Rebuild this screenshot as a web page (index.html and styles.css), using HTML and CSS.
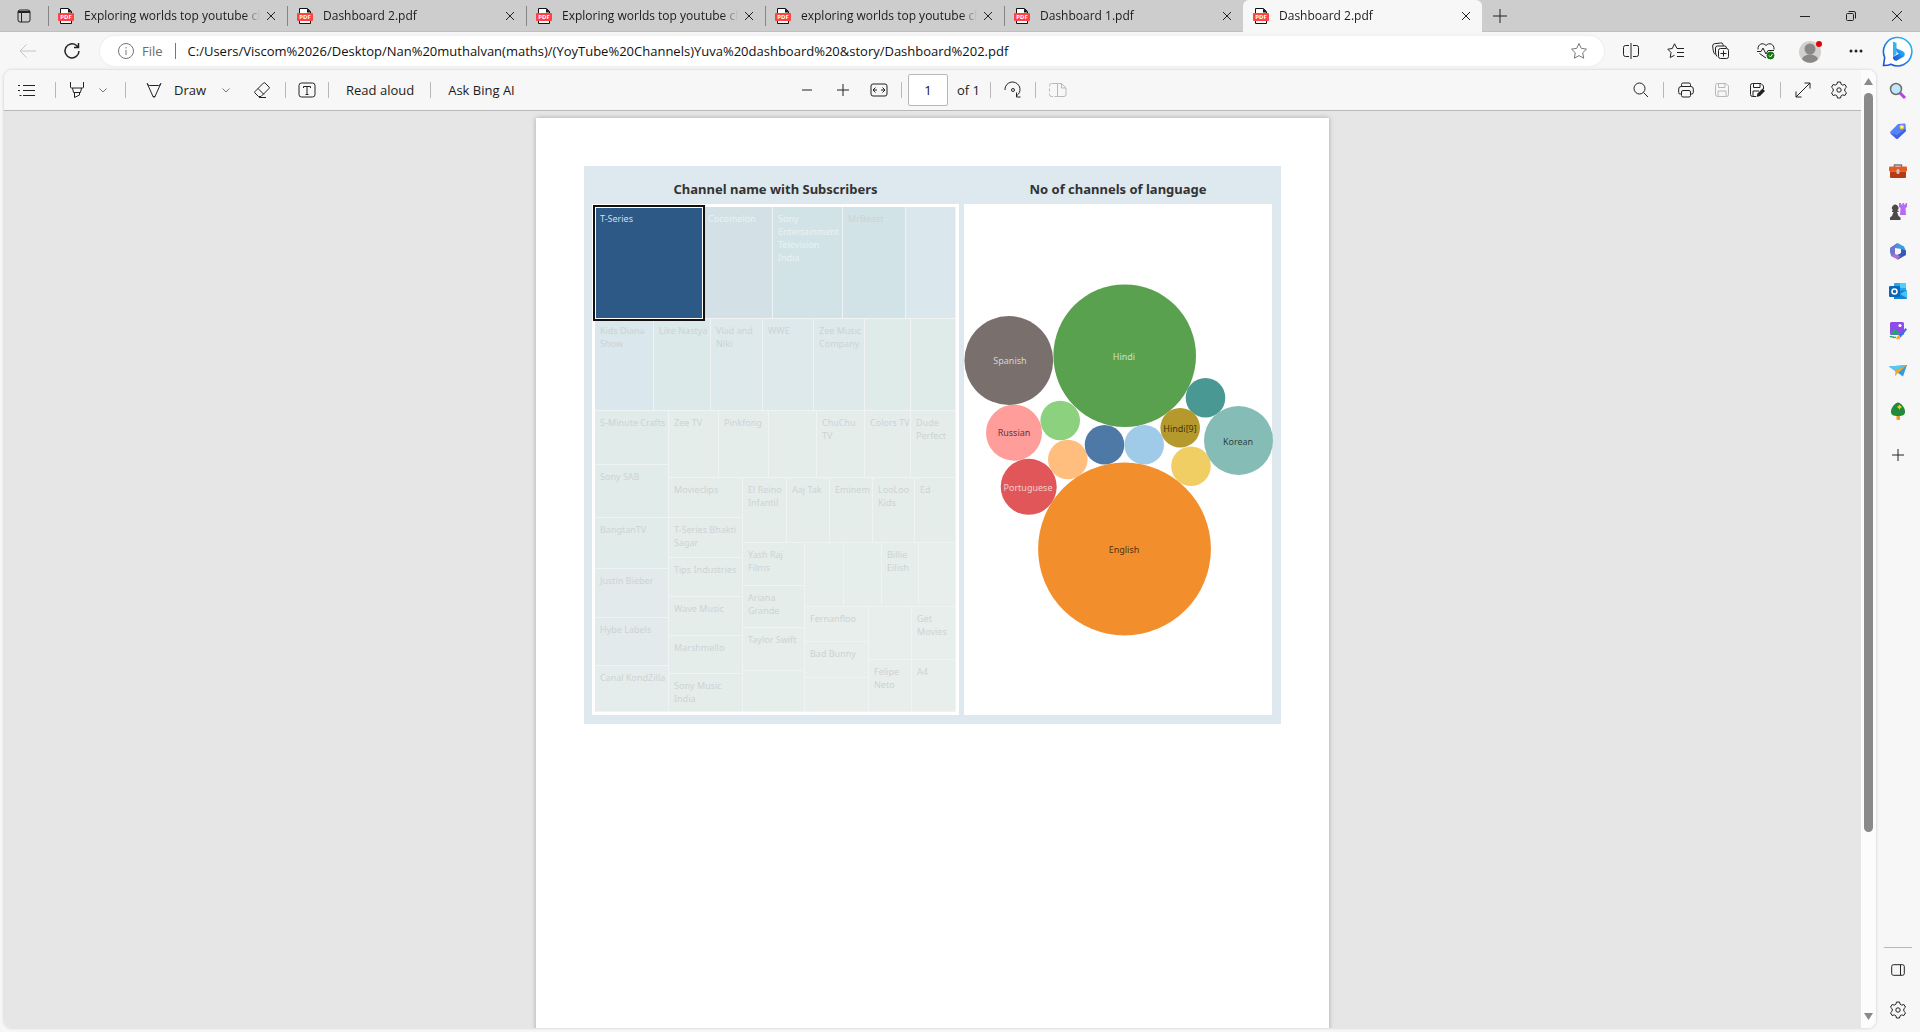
FILE: index.html
```html
<!DOCTYPE html>
<html lang="en">
<head>
<meta charset="utf-8">
<title>Dashboard 2.pdf</title>
<link rel="stylesheet" href="styles.css">
</head>
<body>
<svg class="defs" aria-hidden="true">
  <symbol id="pdf" viewBox="0 0 16 16"><path d="M2.500 .5h8l3 3v12h-11z" fill="#fff" stroke="#111"/><path d="M10 .5v4h4z" fill="#111" stroke="none"/><rect y="5" width="16" height="8" rx="1" fill="#ff4242" stroke="none"/></symbol>
  <symbol id="x" viewBox="0 0 10 10"><path d="M1 1l8 8M9 1l-8 8"/></symbol>
  <symbol id="plus" viewBox="0 0 14 14"><path d="M7 0v14M0 7h14"/></symbol>
  <symbol id="chev" viewBox="0 0 8 5"><path d="M.5 .5L4 4 7.500 .5"/></symbol>
  <symbol id="gear" viewBox="0 0 18 18"><path d="M7.500 1h3l.6 2.200 1.600.9 2.200-.6 1.600 2.700-1.700 1.600v2.400l1.700 1.600-1.600 2.700-2.200-.6-1.600.9-.6 2.200h-3l-.6-2.200-1.600-.9-2.200.6-1.600-2.700 1.700-1.600V7.800L1.500 6.200l1.600-2.700 2.200.6 1.600-.9z" stroke-linejoin="round"/><circle cx="9" cy="9" r="2.200"/></symbol>
</svg>

<header class="tabs">
  <button class="tab-menu" aria-label="Tab actions"><svg width="14" height="14" viewBox="0 0 14 14"><rect x="1" y="1" width="12" height="12" rx="2"/><path d="M1 2.500h12M1 3.500h12M4.500 4v9"/></svg></button>
  <div class="tab"><button class="tab-label"><svg width="16" height="16"><use href="#pdf"/><text x="8" y="11">PDF</text></svg><span>Exploring worlds top youtube channels</span></button><button class="close" aria-label="Close tab"><svg width="10" height="10"><use href="#x"/></svg></button></div>
  <div class="tab"><button class="tab-label"><svg width="16" height="16"><use href="#pdf"/><text x="8" y="11">PDF</text></svg><span>Dashboard 2.pdf</span></button><button class="close" aria-label="Close tab"><svg width="10" height="10"><use href="#x"/></svg></button></div>
  <div class="tab"><button class="tab-label"><svg width="16" height="16"><use href="#pdf"/><text x="8" y="11">PDF</text></svg><span>Exploring worlds top youtube channels</span></button><button class="close" aria-label="Close tab"><svg width="10" height="10"><use href="#x"/></svg></button></div>
  <div class="tab"><button class="tab-label"><svg width="16" height="16"><use href="#pdf"/><text x="8" y="11">PDF</text></svg><span>exploring worlds top youtube channels</span></button><button class="close" aria-label="Close tab"><svg width="10" height="10"><use href="#x"/></svg></button></div>
  <div class="tab"><button class="tab-label"><svg width="16" height="16"><use href="#pdf"/><text x="8" y="11">PDF</text></svg><span>Dashboard 1.pdf</span></button><button class="close" aria-label="Close tab"><svg width="10" height="10"><use href="#x"/></svg></button></div>
  <div class="tab active"><button class="tab-label"><svg width="16" height="16"><use href="#pdf"/><text x="8" y="11">PDF</text></svg><span>Dashboard 2.pdf</span></button><button class="close" aria-label="Close tab"><svg width="10" height="10"><use href="#x"/></svg></button></div>
  <button class="icon" aria-label="New tab"><svg width="14" height="14"><use href="#plus"/></svg></button>
  <div class="window-controls">
    <button aria-label="Minimize"><svg width="10" height="10"><path d="M0 5.500h10"/></svg></button>
    <button aria-label="Restore"><svg width="10" height="10"><rect x=".5" y="2.500" width="7" height="7" rx="1"/><path d="M2.500 .5H8a1.500 1.500 0 0 1 1.500 1.500v5.500"/></svg></button>
    <button aria-label="Close"><svg width="10" height="10"><path d="M0 0l10 10M10 0L0 10"/></svg></button>
  </div>
</header>

<div class="shell">
  <div class="main">
    <nav class="address-row">
      <button class="nav back" aria-label="Back"><svg width="18" height="14"><path d="M17 7H1M7.500 .5L1 7l6.500 6.500"/></svg></button>
      <button class="nav" aria-label="Reload"><svg class="bold" width="18" height="18"><path d="M16 9a7 7 0 1 1-2.500-5.500L15 5M15.500 1v4.500H11"/></svg></button>
      <div class="address">
        <svg width="16" height="16" class="grey"><circle cx="8" cy="8" r="7.500"/><path d="M8 7v5M8 4v1.500"/></svg>
        <span class="scheme">File</span>
        <input type="text" aria-label="Address" value="C:/Users/Viscom%2026/Desktop/Nan%20muthalvan(maths)/(YoyTube%20Channels)Yuva%20dashboard%20&amp;story/Dashboard%202.pdf">
        <button class="icon" aria-label="Add to favorites"><svg class="grey" width="18" height="18"><path d="M9 1.500l2.300 4.900 5.200.7-3.800 3.700 1 5.400L9 13.600l-4.700 2.600 1-5.400L1.500 7.100l5.200-.7z" stroke-linejoin="round"/></svg></button>
      </div>
      <div class="tools">
        <button aria-label="Split screen"><svg width="16" height="16"><path d="M8 0v16M6 2.500H2.500a2 2 0 0 0-2 2v7a2 2 0 0 0 2 2H6M10 2.500h3.500a2 2 0 0 1 2 2v7a2 2 0 0 1-2 2H10"/></svg></button>
        <button aria-label="Favorites"><svg width="18" height="16"><path d="M10 5.500L7.500 .8 5.300 5.500.8 6.200 4 9.500l-.8 5L7.500 12.300M10 5.500h7M10 9.500h7M10 13.500h7" stroke-linejoin="round"/></svg></button>
        <button aria-label="Collections"><svg width="18" height="18"><path d="M3.500 12.500C2 12 1.500 10 1 7L.7 4a2 2 0 0 1 1.500-2.200L8.500 1A2 2 0 0 1 11 2.500l.3 1.500"/><path d="M5 14.500A8 8 0 0 1 3.500 10V6A2 2 0 0 1 5.500 4h7a2 2 0 0 1 2 2"/><rect x="6.500" y="6.500" width="10" height="10" rx="2"/><path d="M11.500 8.500v6M8.500 11.500h6"/></svg></button>
        <button aria-label="Browser essentials"><svg width="18" height="18"><path d="M1 7.500C.5 2 6 0 9 3.500 12 0 17.500 2 17 7.500M0 9.500h4l2-3.500 3 6 2-3.500h6M2.500 11.500L9 16"/><circle cx="13.500" cy="13.500" r="3.500" class="ok"/><path d="M12 13.500l1.500 1.500 2-3" stroke="#fff"/></svg></button>
        <button aria-label="Profile"><svg width="24" height="24" class="fill"><circle cx="11" cy="13" r="11" fill="#d2d0ce"/><circle cx="11" cy="10" r="5.500" fill="#8a8886"/><path d="M3 20c2-6 14-6 16 0-4 5-12 5-16 0z" fill="#8a8886"/><circle cx="20" cy="5" r="3" fill="#e80000"/></svg></button>
        <button aria-label="More"><svg width="14" height="4" class="fill"><circle cx="2" cy="2" r="1.500"/><circle cx="7" cy="2" r="1.500"/><circle cx="12" cy="2" r="1.500"/></svg></button>
      </div>
    </nav>

    <section class="viewer">
      <div class="document">
        <div class="toolbar">
          <div class="group left">
            <button class="lead" aria-label="Contents"><svg width="18" height="14"><path d="M5 2.500h12M5 7.500h12M5 12.500h12M0 2.500h2M0 7.500h2M1.500 12.500h2"/></svg></button>
            <i class="sep"></i>
            <button aria-label="Highlight"><svg width="16" height="18"><path d="M1.500 1v5a1 1 0 0 0 1 1h11a1 1 0 0 0 1-1V1M3.500 7l1 4.500h7l1-4.500M5.500 11.500v5l5-2.500v-2.500"/></svg></button>
            <button class="small" aria-label="Highlight colors"><svg class="grey" width="8" height="5"><use href="#chev"/></svg></button>
            <i class="sep far"></i>
            <button class="draw"><svg width="16" height="16"><path d="M1 1l6 13.500h2L15 1M1 2.500l2.500 1h9l2.500-1M7 14.500l1 1 1-1"/></svg>Draw</button>
            <button class="small" aria-label="Draw options"><svg class="grey" width="8" height="5"><use href="#chev"/></svg></button>
            <button class="erase" aria-label="Erase"><svg width="18" height="18"><path d="M2 10.500L10.500 2a1 1 0 0 1 1.500 0l4 4a1 1 0 0 1 0 1.500L8 15.500H5.500L2 12a1 1 0 0 1 0-1.500zM5 7.500l6 6M6 16.500h7"/></svg></button>
            <i class="sep"></i>
            <button aria-label="Add text"><svg width="18" height="16"><rect x="1" y="1" width="16" height="14" rx="2.500"/><path d="M5.500 6V4.500h7V6M9 4.500v8M7.500 12.500h3"/></svg></button>
            <i class="sep"></i>
            <button class="text">Read aloud</button>
            <i class="sep"></i>
            <button class="text">Ask Bing AI</button>
          </div>
          <div class="group center">
            <button aria-label="Zoom out"><svg width="10" height="2"><path d="M0 1h10"/></svg></button>
            <button aria-label="Zoom in"><svg width="12" height="12"><path d="M6 0v12M0 6h12"/></svg></button>
            <button aria-label="Fit to width"><svg width="18" height="14"><rect x="1" y="1" width="16" height="12" rx="2"/><path d="M7 7H3.500M5.500 4.500L3 7l2.500 2.500M11 7h3.500M12.500 4.500L15 7l-2.500 2.500"/></svg></button>
            <i class="sep"></i>
            <input type="text" value="1" id="page-number"><label for="page-number">of 1</label>
            <i class="sep"></i>
            <button aria-label="Rotate"><svg width="18" height="18"><path d="M1 9a7.500 7.500 0 1 1 12 5.500M12.500 11.500v4.500h4"/><circle cx="9" cy="9" r="1.500"/></svg></button>
            <i class="sep"></i>
            <button aria-label="Page view" disabled><svg width="18" height="14"><path d="M8 .5H3M2.500 .5a2 2 0 0 0-2 2v1M.5 5.500v3M.5 10.500v1a2 2 0 0 0 2 2H4M5.500 13.500H8M8.500 .5v13H15a2 2 0 0 0 2-2V5L12.500 .5zM12.500 .5V5H17"/></svg></button>
          </div>
          <div class="group right">
            <button aria-label="Search"><svg width="16" height="16"><circle cx="6.500" cy="6.500" r="5.500"/><path d="M10.500 10.500L15 15"/></svg></button>
            <i class="sep"></i>
            <button aria-label="Print"><svg width="16" height="16"><path d="M3.500 4.500V2.500a1.500 1.500 0 0 1 1.500-1.500h6a1.500 1.500 0 0 1 1.500 1.500v2M3.500 12H2.500A1.500 1.500 0 0 1 .7 10.500V7a2.500 2.500 0 0 1 2.500-2.500h9.600A2.500 2.500 0 0 1 15.300 7v3.500a1.500 1.500 0 0 1-1.500 1.500h-1.300"/><rect x="3.500" y="8.500" width="9" height="6.500" rx="1.500"/></svg></button>
            <button aria-label="Save" disabled><svg width="14" height="14"><path d="M.5 2.500a2 2 0 0 1 2-2H11L13.500 3v8.500a2 2 0 0 1-2 2h-9a2 2 0 0 1-2-2zM3.500 .5v4H10v-4M3 13.500V8h8v5.500"/></svg></button>
            <button aria-label="Save as"><svg width="16" height="14"><path d="M6 13.500H2.500a2 2 0 0 1-2-2v-9a2 2 0 0 1 2-2H11L13.500 3v3M3.500 .5v4H10v-4M3 13.500V8h6"/><path d="M6.500 14l1-3.500 5-5 2.500 2.500-5 5z" fill="#222" stroke="none"/></svg></button>
            <i class="sep"></i>
            <button aria-label="Full screen"><svg width="16" height="16"><path d="M9.500 1H15v5.500M15 1L1 15M1 9.500V15h5.500"/></svg></button>
            <button aria-label="Settings"><svg width="18" height="18"><use href="#gear"/></svg></button>
          </div>
        </div>

        <div class="canvas">
          <article class="page">
            <div class="dashboard">
              <section class="panel">
                <h2>Channel name with Subscribers</h2>
                <div class="treemap">
                  <div class="row r1 c-teal">
                    <div class="tile selected">T-Series</div><div class="tile light c-slate">Cocomelon</div><div class="tile light">Sony Entertainment Television India</div><div class="tile">MrBeast</div><div class="tile c-sky"></div>
                  </div>
                  <div class="row r2 c-mist">
                    <div class="tile c-sky">Kids Diana Show</div><div class="tile c-aqua">Like Nastya</div><div class="tile">Vlad and Niki</div><div class="tile">WWE</div><div class="tile">Zee Music Company</div><div class="tile c-mint"></div><div class="tile c-mint"></div>
                  </div>
                  <div class="split s1">
                    <div class="col k1 c-ice">
                      <div class="tile">5-Minute Crafts</div><div class="tile">Sony SAB</div><div class="tile">BangtanTV</div><div class="tile c-haze">Justin Bieber</div><div class="tile c-haze">Hybe Labels</div><div class="tile c-sage">Canal KondZilla</div>
                    </div>
                    <div class="stack t1">
                      <div class="row r3">
                        <div class="tile">Zee TV</div><div class="tile">Pinkfong</div><div class="tile"></div><div class="tile">ChuChu TV</div><div class="tile">Colors TV</div><div class="tile">Dude Perfect</div>
                      </div>
                      <div class="split s2">
                        <div class="col k2">
                          <div class="tile">Movieclips</div><div class="tile">T-Series Bhakti Sagar</div><div class="tile">Tips Industries</div><div class="tile">Wave Music</div><div class="tile">Marshmello</div><div class="tile">Sony Music India</div>
                        </div>
                        <div class="stack t2">
                          <div class="row r4">
                            <div class="tile">El Reino Infantil</div><div class="tile">Aaj Tak</div><div class="tile">Eminem</div><div class="tile">LooLoo Kids</div><div class="tile">Ed</div>
                          </div>
                          <div class="split s3">
                            <div class="col k3">
                              <div class="tile">Yash Raj Films</div><div class="tile">Ariana Grande</div><div class="tile c-leaf">Taylor Swift</div><div class="tile c-leaf"></div>
                            </div>
                            <div class="stack t3">
                              <div class="row r5 c-leaf">
                                <div class="tile"></div><div class="tile"></div><div class="tile">Billie Eilish</div><div class="tile c-fog"></div>
                              </div>
                              <div class="split s4 c-fog">
                                <div class="col k4">
                                  <div class="tile">Fernanfloo</div><div class="tile">Bad Bunny</div><div class="tile"></div>
                                </div>
                                <div class="quad">
                                  <div class="tile"></div><div class="tile">Get Movies</div><div class="tile">Felipe Neto</div><div class="tile">A4</div>
                                </div>
                              </div>
                            </div>
                          </div>
                        </div>
                      </div>
                    </div>
                  </div>
                </div>
              </section>
              <section class="panel">
                <h2>No of channels of language</h2>
                <div class="bubbles">
                  <svg viewBox="0 0 308 511" role="img" aria-label="Channels by language">
                    <circle cx="44.800" cy="156.500" r="44.400" fill="#79706e"/>
                    <circle cx="160.700" cy="151.700" r="71.300" fill="#59a14f"/>
                    <circle cx="241.500" cy="193.800" r="19.800" fill="#499894"/>
                    <circle cx="50" cy="228.700" r="28" fill="#ff9d9a"/>
                    <circle cx="96.200" cy="216.500" r="19.800" fill="#8cd17d"/>
                    <circle cx="103.800" cy="255.500" r="19.800" fill="#ffbe7d"/>
                    <circle cx="140.500" cy="240.800" r="19.800" fill="#4e79a7"/>
                    <circle cx="180.200" cy="240.800" r="19.800" fill="#a0cbe8"/>
                    <circle cx="216.200" cy="223.800" r="19.800" fill="#b6992d"/>
                    <circle cx="227" cy="262.200" r="19.800" fill="#f1ce63"/>
                    <circle cx="274.500" cy="236.500" r="34.500" fill="#86bcb6"/>
                    <circle cx="64.700" cy="282.800" r="28" fill="#e15759"/>
                    <circle cx="160.500" cy="345" r="86.400" fill="#f28e2b"/>
                    <text class="pale" x="46" y="160">Spanish</text>
                    <text class="pale" x="160" y="156">Hindi</text>
                    <text x="50" y="232">Russian</text>
                    <text x="216" y="228">Hindi[9]</text>
                    <text x="274" y="241">Korean</text>
                    <text class="pale" x="64" y="287">Portuguese</text>
                    <text x="160" y="349">English</text>
                  </svg>
                </div>
              </section>
            </div>
          </article>
        </div>
      </div>
      <div class="scrollbar">
        <svg width="9" height="7"><path d="M0 7L4.500 0 9 7z"/></svg>
        <div class="track"><div class="thumb"></div></div>
        <svg width="9" height="7"><path d="M0 0h9L4.500 7z"/></svg>
      </div>
    </section>
  </div>

  <aside class="sidebar">
    <button class="bing" aria-label="Bing chat"><svg class="color" width="32" height="32" viewBox="0 0 32 32"><defs><linearGradient id="bg1" x1="0" y1="1" x2="1" y2="0"><stop stop-color="#2448c8"/><stop offset=".5" stop-color="#1e88f0"/><stop offset="1" stop-color="#35c8e8"/></linearGradient></defs><path d="M1.500 30.500l1.200-8A14.200 14.200 0 1 1 9 29.200c-2 1-5 1.300-7.500 1.300z" fill="#fff" stroke="url(#bg1)" stroke-width="1.600"/><path d="M11 6.500l3.500 1.500v11l-3.500 3z" fill="#35b4f0"/><path d="M11 22l6-3.500-2-1-1.500-4.500 7 3a3.500 3.500 0 0 1 1.500 5.500L15 25.500A3 3 0 0 1 11 23z" fill="url(#bg1)"/></svg></button>
    <button aria-label="Search"><svg class="color" width="18" height="18"><path d="M11 11l5 5" stroke="#c23cf0" stroke-width="3"/><circle cx="7" cy="7" r="5.500" fill="#bfe6fa" stroke="#6d6d6d" stroke-width="1.500"/></svg></button>
    <button aria-label="Shopping"><svg class="color" width="18" height="18"><path d="M9 2l6.500-.5a1 1 0 0 1 1 1L17 9l-8 7.500a1.500 1.500 0 0 1-2 0L1.500 11.500a1.500 1.500 0 0 1 0-2z" fill="#5484f8"/><path d="M1.500 11.500L7 16.500a1.500 1.500 0 0 0 2 0L17 9l-1-2-8 6z" fill="#4560e4"/><circle cx="12.800" cy="5" r="1.700" fill="#fff" stroke="#f0cc28" stroke-width="1.300"/></svg></button>
    <button aria-label="Tools"><svg class="color" width="18" height="18"><path d="M5.500 5V3h7v2" fill="none" stroke="#777" stroke-width="1.500"/><rect y="4.500" width="18" height="5" rx="1" fill="#e35b25"/><path d="M1 9.500h16V15a1 1 0 0 1-1 1H2a1 1 0 0 1-1-1z" fill="#b83a12"/><rect x="7.500" y="7" width="3" height="5" rx="1.500" fill="#c8c8c8"/></svg></button>
    <button aria-label="Games"><svg class="color" width="18" height="18"><path d="M10 1h2v1.500h1.500V1h1.500v1.500h1.500V1H18v4l-1.500 1 .5 7h-6l.5-7L10 5z" fill="#b96af5"/><path d="M1 18v-2.500l2-1.500 1.500-4H3V8.500h1.200a3.200 3.200 0 1 1 4 0H9.500V10H8l1.500 4 2 1.500V18z" fill="#4c4a4a"/></svg></button>
    <button aria-label="Microsoft 365"><svg class="color" width="18" height="18"><path d="M8.500 1l6.500 3.500 2 4.500-5 2V7L6 6 1 12V6z" fill="#3d9be0"/><path d="M1 6l7.500-5L6 6v6l5 4-2 1.500L2 14z" fill="#7a70cc"/><path d="M17 8.500V13l-8 4.500-4-3 7-3.500V7z" fill="#3d57b8"/><path d="M9 17.500l-7-4 4-1.500 5 2z" fill="#b56fd0"/><circle cx="9" cy="9.300" r="2.600" fill="#f7f7f7"/></svg></button>
    <button aria-label="Outlook"><svg class="color" width="18" height="18"><rect x="5" y="1" width="12" height="11" rx="1" fill="#28a8ea"/><path d="M11 1h5a1 1 0 0 1 1 1v4h-6z" fill="#50d0f8"/><path d="M5 9l13-1v8a1 1 0 0 1-1 1H5z" fill="#1584d8"/><path d="M11 12l7-4v8z" fill="#45c4f4"/><rect y="4" width="11" height="11" rx="1" fill="#0a68b8"/><circle cx="5.500" cy="9.500" r="2.500" fill="none" stroke="#fff" stroke-width="1.500"/></svg></button>
    <button aria-label="Image creator"><svg class="color" width="18" height="18"><rect x="1" width="14" height="13" rx="1.500" fill="#8d4cea"/><circle cx="11" cy="3.500" r="1.600" fill="#fff"/><path d="M1 12l5-5 6 5.500H2z" fill="#25a56a"/><path d="M1 15c2-2 3 2 6 0" stroke="#25a56a" stroke-width="1.500" fill="none"/><path d="M10 13.500L16.500 6l1.500 1.500-6.500 8z" fill="#3c6cf0"/><path d="M7 17l2-4 3 2.500c-1 1.500-3 2-5 1.500z" fill="#ffa726"/></svg></button>
    <button aria-label="Drop"><svg class="color" width="18" height="18"><path d="M0 4.500L18 3l-4 11.500-5-3.500z" fill="#2f9bea"/><path d="M0 4.500L18 3 6.500 8.500z" fill="#55c8f5"/><path d="M18 3L6.500 8.500 6 14l3-3z" fill="#f5a623"/></svg></button>
    <button aria-label="E-tree"><svg class="color" width="18" height="18"><rect x="7.500" y="12" width="3.500" height="6" rx="1" fill="#f29a1f"/><path d="M9 .5C12 1 15.500 5 16 9c.3 4-2 5-7 5s-7.300-1-7-5c.5-4 4-8 7-8.500z" fill="#228b3a"/><path d="M10.500 2.500l1 1.500 1.700 1-1.700 1-1 1.700-1-1.700-1.700-1 1.700-1z" fill="#ffc928"/></svg></button>
    <button class="add" aria-label="Customize"><svg width="12" height="12"><path d="M6 0v12M0 6h12"/></svg></button>
    <hr>
    <button aria-label="Sidebar layout"><svg width="14" height="12"><rect x=".7" y=".7" width="12.600" height="10.600" rx="1.800"/><path d="M9.500 1v10"/></svg></button>
    <button aria-label="Settings"><svg width="18" height="18"><use href="#gear"/></svg></button>
  </aside>
</div>
</body>
</html>
```
FILE: styles.css
```css
* { box-sizing: border-box; }
body {
  margin: 0;
  height: 100vh;
  display: flex;
  flex-direction: column;
  overflow: hidden;
  background: #f7f7f7;
  color: #1b1b1b;
  font: 12px/16px "Open Sans", "Noto Sans", sans-serif;
}
button {
  display: inline-flex;
  align-items: center;
  justify-content: center;
  padding: 0;
  border: 0;
  background: none;
  color: inherit;
  font: inherit;
}
input { border: 0; padding: 0; background: none; color: #111; font: inherit; outline: 0; min-width: 0; }
svg { display: block; flex: none; fill: none; stroke: #222; }
svg.grey { stroke: #767676; }
svg.bold { stroke-width: 1.500; }
svg.fill { fill: #222; stroke: none; }
svg.color { stroke: none; }
.defs { position: absolute; width: 0; height: 0; }

/* Tab strip */
.tabs { display: flex; align-items: stretch; height: 32px; background: #cdcdcd; border-bottom: 1px solid #c0c0c0; flex: none; }
.tab-menu { width: 48px; flex: none; }
.tab { display: flex; align-items: center; flex: 0 1 239px; min-width: 0; padding: 0 11px 0 10px; position: relative; }
.tab::before { content: ""; position: absolute; left: 0; top: 6px; width: 1px; height: 20px; background: #858585; }
.tab.active { background: #f7f7f7; border-radius: 6px 6px 0 0; margin-bottom: -1px; }
.tab.active::before { display: none; }
.tab-label { flex: 1; min-width: 0; justify-content: flex-start; gap: 10px; }
.tab-label span { flex: 1; min-width: 0; overflow: hidden; white-space: nowrap; text-align: left; -webkit-mask-image: linear-gradient(to left, transparent, #000 16px); mask-image: linear-gradient(to left, transparent, #000 16px); }
.tab-label text { font: bold 6px "Noto Sans", sans-serif; text-anchor: middle; fill: #fff; stroke: none; }
.close { width: 10px; margin-left: 6px; }
.tabs > .icon { width: 36px; }
.window-controls { display: flex; margin-left: auto; }
.window-controls button { width: 46px; }

.shell { display: flex; flex: 1; min-height: 0; }
.main { display: flex; flex-direction: column; flex: 1; min-width: 0; }

/* Address bar */
.address-row { display: flex; align-items: center; height: 38px; padding: 0 0 0 8px; flex: none; }
.nav { width: 40px; height: 30px; margin-right: 4px; }
.address { display: flex; align-items: center; flex: 1; height: 30px; padding: 0 16px 0 18px; margin-left: 4px; border-radius: 15px; background: #fff; box-shadow: 0 0 3px #e4e4e4; font-size: 13px; }
.back svg { stroke: #c4c4c4; }
.scheme { margin: 0 12px 0 8px; padding-right: 12px; border-right: 1px solid #767676; color: #6b6b6b; }
.address input { flex: 1; }
.tools { display: flex; gap: 5px; margin-left: 7px; }
.tools button { width: 40px; height: 30px; }
.ok { fill: #107c10; stroke: #107c10; }

/* PDF viewer */
.viewer { display: flex; flex: 1; min-height: 0; margin: 0 0 4px 4px; border-radius: 8px; overflow: hidden; box-shadow: 0 0 3px #c4c4c4; }
.document { display: flex; flex-direction: column; flex: 1; min-width: 0; }
.toolbar { display: grid; grid-template-columns: 1fr auto 1fr; align-items: center; height: 41px; background: #f7f7f7; border-bottom: 1px solid #b8b8b8; font-size: 13px; flex: none; }
.group { display: flex; align-items: center; }
.group button { width: 32px; height: 32px; }
.group button:disabled svg { stroke: #b8b8b8; }
.group .lead { width: 46px; }
.group .erase { width: 36px; margin-left: 8px; }
.group .small { width: 20px; }
.group .text { width: auto; padding: 0 11px 0 12px; }
.group .draw { width: auto; padding: 0 10px 0 20px; gap: 12px; }
.sep { width: 1px; height: 16px; margin: 0 5px; background: #b8b8b8; }
.sep.far { margin: 0 0 0 12px; }
.center, .right { gap: 4px; }
.center .sep, .right .sep { margin: 0 2px; }
.center input { width: 40px; height: 32px; border: 1px solid #b8b8b8; border-radius: 2px; background: #fff; text-align: center; }
.center label { margin: 0 4px 0 5px; }
.right { justify-content: flex-end; padding-right: 6px; }
.canvas { flex: 1; min-height: 0; overflow: hidden; padding-top: 7px; background: #e6e6e6; }
.page { width: 793px; max-width: 100%; min-height: 1123px; margin: 0 auto; padding: 48px; background: #fff; box-shadow: 0 0 5px #a8a8a8; }
.scrollbar { display: flex; flex-direction: column; align-items: center; gap: 8px; width: 15px; padding: 8px 0; background: #fcfcfc; }
.scrollbar svg { fill: #8a8a8a; stroke: none; }
.track { flex: 1; width: 9px; }
.thumb { height: 81%; border-radius: 5px; background: #8a8a8a; }

/* Dashboard */
.dashboard { display: grid; grid-template-columns: 367fr 308fr; gap: 5px; padding: 0 9px 9px 8px; background: #dde9ee; font-family: "Noto Sans", sans-serif; }
.panel { display: flex; flex-direction: column; min-width: 0; }
h2 { margin: 0; padding: 13px 0 5px; font-size: 13px; line-height: 20px; font-weight: 700; color: #333; text-align: center; }
.treemap { display: grid; grid-template-rows: 112fr 92fr 301fr; min-height: 511px; padding: 3px; background: #fff; font-size: 9px; line-height: 13px; color: #cdd3d3; }
.row, .col, .split, .stack, .quad { display: grid; min-width: 0; min-height: 0; }
.r1 { grid-template-columns: 108fr 70fr 70fr 63fr 50fr; }
.r2 { grid-template-columns: 59fr 57fr 52fr 51fr 51fr 46fr 45fr; }
.r3 { grid-template-columns: 50fr 50fr 48fr 48fr 46fr 45fr; }
.r4 { grid-template-columns: 44fr 43fr 43fr 42fr 41fr; }
.r5 { grid-template-columns: 39fr 38fr 37fr 37fr; }
.s1 { grid-template-columns: 74fr 287fr; }
.s2 { grid-template-columns: 74fr 213fr; }
.s3 { grid-template-columns: 62fr 151fr; }
.s4 { grid-template-columns: 64fr 87fr; }
.k1 { grid-template-rows: 54fr 53fr 51fr 49fr 48fr 46fr; }
.k2 { grid-template-rows: 40fr 40fr 39fr 39fr 38fr 38fr; }
.k3 { grid-template-rows: 43fr 42fr 43fr 41fr; }
.k4 { grid-template-rows: 35fr 36fr 34fr; }
.t1 { grid-template-rows: 67fr 234fr; }
.t2 { grid-template-rows: 65fr 169fr; }
.t3 { grid-template-rows: 64fr 105fr; }
.quad { grid-template: 53fr 52fr / 43fr 44fr; }
.treemap { --tile: #e5edeb; }
.tile { min-width: 0; min-height: 0; overflow: hidden; padding: 5px 0 0 5px; border: solid #f0f3f3; border-width: 0 1px 1px 0; background: var(--tile); }
.tile.light { color: #eaf2f4; }
.tile.selected { padding: 4px; background: #2c5985; color: #d5dee7; border: 1px solid #fff; outline: 2px solid #111; z-index: 1; }
.c-teal { --tile: #d2e3e7; }
.c-slate { --tile: #d3e0e6; }
.c-sky { --tile: #dae7ec; }
.c-mist { --tile: #dee9eb; }
.c-aqua { --tile: #dbe9e9; }
.c-mint { --tile: #dfebe9; }
.c-ice { --tile: #e0ebea; }
.c-haze { --tile: #e2eaec; }
.c-sage { --tile: #e4edeb; }
.c-leaf { --tile: #e5eeea; }
.c-fog { --tile: #e8eeec; }
.bubbles { flex: 1; background: #fff; }
.bubbles svg { width: 100%; overflow: visible; stroke: none; font-size: 9px; }
.bubbles text { fill: #000; fill-opacity: .7; text-anchor: middle; }
.bubbles .pale { fill: #fff; }

/* Edge sidebar */
.sidebar { display: flex; flex-direction: column; align-items: center; width: 44px; padding: 3px 0 2px; }
.sidebar button { width: 40px; height: 40px; flex: none; }
.sidebar .bing { height: 32px; margin-bottom: 4px; }
.sidebar .add { margin-top: 4px; }
.sidebar hr { width: 28px; margin: auto 0 2px; border: 0; border-top: 1px solid #b8b8b8; }
```
